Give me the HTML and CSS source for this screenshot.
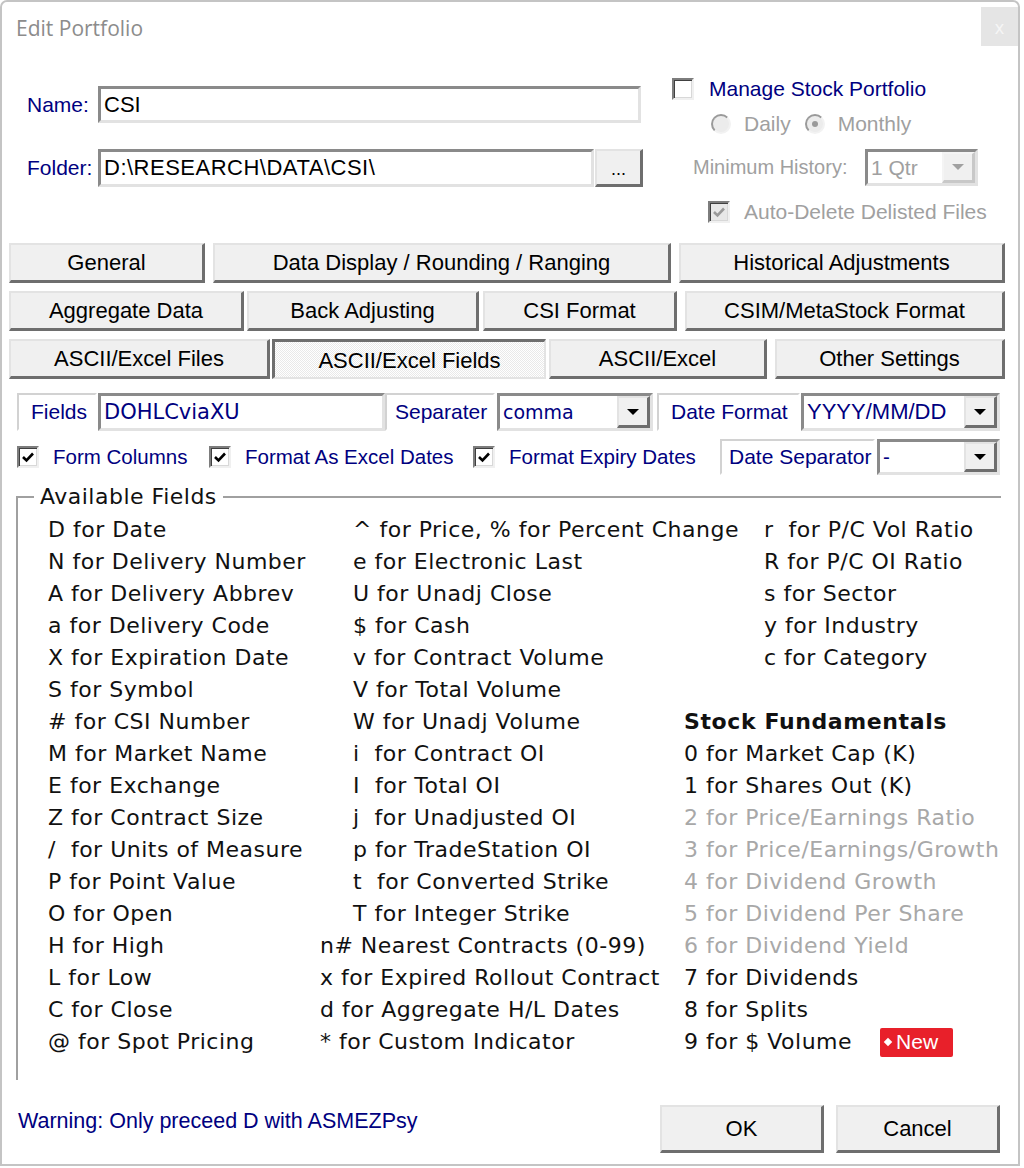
FILE: index.html
```html
<!DOCTYPE html>
<html>
<head>
<meta charset="utf-8">
<title>Edit Portfolio</title>
<link rel="stylesheet" href="styles.css">
</head>
<body>
<div class="window">
  <div class="titlebar">
    <span class="title">Edit Portfolio</span>
    <span class="close">x</span>
  </div>

  <div class="top">
    <div class="ident">
      <div class="row r-name">
        <span class="lbl">Name:</span>
        <div class="input w-name">CSI</div>
      </div>
      <div class="row r-folder">
        <span class="lbl">Folder:</span>
        <div class="input w-folder">D:\RESEARCH\DATA\CSI\</div>
        <div class="btn browse">...</div>
      </div>
    </div>
    <div class="stock">
      <div class="srow s-manage">
        <span class="chk"></span>
        <span class="navy">Manage Stock Portfolio</span>
      </div>
      <div class="srow s-radio">
        <span class="radio"></span><span class="dis">Daily</span>
        <span class="radio on"></span><span class="dis">Monthly</span>
      </div>
      <div class="srow s-hist">
        <span class="dis hist-lbl">Minimum History:</span>
        <div class="select disabled w-hist"><span class="val">1 Qtr</span><span class="arrow"></span></div>
      </div>
      <div class="srow s-auto">
        <span class="chk disabled checked"><svg viewBox="0 0 16 16"><polyline points="3,8 6.5,11.5 13,4.5"/></svg></span>
        <span class="dis">Auto-Delete Delisted Files</span>
      </div>
    </div>
  </div>

  <div class="tabs">
    <div class="tabrow">
      <div class="btn tab t196">General</div>
      <div class="btn tab t458">Data Display / Rounding / Ranging</div>
      <div class="btn tab t326">Historical Adjustments</div>
    </div>
    <div class="tabrow">
      <div class="btn tab t235">Aggregate Data</div>
      <div class="btn tab t232 g3">Back Adjusting</div>
      <div class="btn tab t194 g4">CSI Format</div>
      <div class="btn tab t320">CSIM/MetaStock Format</div>
    </div>
    <div class="tabrow">
      <div class="btn tab t261">ASCII/Excel Files</div>
      <div class="btn tab t274 g2 pressed">ASCII/Excel Fields</div>
      <div class="btn tab t218 g3">ASCII/Excel</div>
      <div class="btn tab t230">Other Settings</div>
    </div>
  </div>

  <div class="frow">
    <div class="lblbox b-fields">Fields</div>
    <div class="input verd w-fields">DOHLCviaXU</div>
    <div class="lblbox b-sep">Separater</div>
    <div class="select w-sep"><span class="val verd small">comma</span><span class="arrow"></span></div>
    <div class="lblbox b-datef">Date Format</div>
    <div class="select w-datef"><span class="val">YYYY/MM/DD</span><span class="arrow"></span></div>
  </div>

  <div class="crow">
    <div class="citem c1"><span class="chk checked"><svg viewBox="0 0 16 16"><polyline points="3,8 6.5,11.5 13,4.5"/></svg></span><span class="navy">Form Columns</span></div>
    <div class="citem c2"><span class="chk checked"><svg viewBox="0 0 16 16"><polyline points="3,8 6.5,11.5 13,4.5"/></svg></span><span class="navy">Format As Excel Dates</span></div>
    <div class="citem c3"><span class="chk checked"><svg viewBox="0 0 16 16"><polyline points="3,8 6.5,11.5 13,4.5"/></svg></span><span class="navy">Format Expiry Dates</span></div>
    <div class="lblbox b-dsep">Date Separator</div>
    <div class="select w-dsep"><span class="val">-</span><span class="arrow"></span></div>
  </div>

  <fieldset class="group">
    <legend>Available Fields</legend>
    <div class="cols">
      <div class="col col1">
        <div>D for Date</div>
        <div>N for Delivery Number</div>
        <div>A for Delivery Abbrev</div>
        <div>a for Delivery Code</div>
        <div>X for Expiration Date</div>
        <div>S for Symbol</div>
        <div># for CSI Number</div>
        <div>M for Market Name</div>
        <div>E for Exchange</div>
        <div>Z for Contract Size</div>
        <div>/&nbsp; for Units of Measure</div>
        <div>P for Point Value</div>
        <div>O for Open</div>
        <div>H for High</div>
        <div>L for Low</div>
        <div>C for Close</div>
        <div>@ for Spot Pricing</div>
      </div>
      <div class="col col2">
        <div class="ind">^ for Price, % for Percent Change</div>
        <div class="ind">e for Electronic Last</div>
        <div class="ind">U for Unadj Close</div>
        <div class="ind">$ for Cash</div>
        <div class="ind">v for Contract Volume</div>
        <div class="ind">V for Total Volume</div>
        <div class="ind">W for Unadj Volume</div>
        <div class="ind">i&nbsp; for Contract OI</div>
        <div class="ind">I&nbsp; for Total OI</div>
        <div class="ind">j&nbsp; for Unadjusted OI</div>
        <div class="ind">p for TradeStation OI</div>
        <div class="ind">t&nbsp; for Converted Strike</div>
        <div class="ind">T for Integer Strike</div>
        <div>n# Nearest Contracts (0-99)</div>
        <div>x for Expired Rollout Contract</div>
        <div>d for Aggregate H/L Dates</div>
        <div>* for Custom Indicator</div>
      </div>
      <div class="col col3">
        <div class="ind3">r&nbsp; for P/C Vol Ratio</div>
        <div class="ind3">R for P/C OI Ratio</div>
        <div class="ind3">s for Sector</div>
        <div class="ind3">y for Industry</div>
        <div class="ind3">c for Category</div>
        <div>&nbsp;</div>
        <div class="bold">Stock Fundamentals</div>
        <div>0 for Market Cap (K)</div>
        <div>1 for Shares Out (K)</div>
        <div class="gray">2 for Price/Earnings Ratio</div>
        <div class="gray">3 for Price/Earnings/Growth</div>
        <div class="gray">4 for Dividend Growth</div>
        <div class="gray">5 for Dividend Per Share</div>
        <div class="gray">6 for Dividend Yield</div>
        <div>7 for Dividends</div>
        <div>8 for Splits</div>
        <div class="newrow">9 for $ Volume <span class="badge"><span class="dot"></span>New</span></div>
      </div>
    </div>
  </fieldset>

  <div class="bottom">
    <span class="navy warn">Warning: Only preceed D with ASMEZPsy</span>
    <div class="btns">
      <div class="btn ok">OK</div>
      <div class="btn cancel">Cancel</div>
    </div>
  </div>
</div>
</body>
</html>
```

FILE: styles.css
```css
* { box-sizing: border-box; }
html, body { margin: 0; padding: 0; background: #fff; }
body {
  width: 1024px;
  height: 1168px;
  overflow: hidden;
  font-family: "Liberation Sans", Arial, sans-serif;
  font-size: 22px;
  color: #000;
}

.window {
  width: 1020px;
  height: 1166px;
  border: 2px solid #c4c4c4;
  border-radius: 7px 7px 0 0;
  background: #fff;
  display: flex;
  flex-direction: column;
}

/* title bar */
.titlebar {
  height: 56px;
  display: flex;
  justify-content: space-between;
  align-items: flex-start;
}
.title {
  font-family: "Open Sans", sans-serif;
  font-size: 21px;
  line-height: 29px;
  color: #8c8c8c;
  margin: 12px 0 0 14px;
}
.close {
  width: 37px;
  height: 39px;
  margin-top: 5px;
  background: #e5e5e5;
  color: #f6f6f6;
  font-family: "Open Sans", sans-serif;
  font-size: 18px;
  display: flex;
  align-items: center;
  justify-content: center;
}

.navy { color: #000080; }
.dis { color: #a0a0a0; }
.verd { font-family: "DejaVu Sans", Verdana, sans-serif; font-size: 21px; }
.verd.small { font-size: 19px; }

/* top section */
.top {
  display: flex;
  height: 165px;
  margin-top: 20px;
}
.ident {
  margin: 8px 0 0 25px;
  width: 618px;
}
.row { display: flex; align-items: center; }
.r-name { height: 37px; }
.r-folder { height: 38px; margin-top: 26px; }
.lbl { width: 71px; color: #000080; font-size: 21px; }

.input {
  height: 100%;
  border: 3px solid;
  border-color: #8a8a8a #e2e2e2 #e2e2e2 #8a8a8a;
  background: #fff;
  display: flex;
  align-items: center;
  padding-left: 3px;
  white-space: nowrap;
  overflow: hidden;
}
.w-name { width: 543px; }
.w-folder { width: 496px; letter-spacing: 0.5px; }
.w-fields { width: 287px; margin-left: 1px; color: #000080; }

.btn {
  background: #f0f0f0;
  border-style: solid;
  border-width: 2px 3px 3px 2px;
  border-color: #e3e3e3 #6e6e6e #6e6e6e #e3e3e3;
  display: flex;
  align-items: center;
  justify-content: center;
  white-space: nowrap;
  color: #000;
}
.browse { width: 48px; height: 100%; margin-left: 1px; padding-top: 4px; font-size: 18px; }

.stock {
  margin-left: 27px;
  display: flex;
  flex-direction: column;
  font-size: 21px;
}
.srow { display: flex; align-items: center; }
.s-manage { height: 22px; }
.s-manage .chk { margin-right: 15px; }
.s-radio { height: 22px; margin-top: 13px; padding-left: 39px; }
.s-radio .radio { margin-right: 13px; }
.s-radio .dis + .radio { margin-left: 14px; }
.s-hist { height: 37px; margin-top: 14px; padding-left: 21px; }
.hist-lbl { width: 172px; font-size: 20px; }
.w-hist { width: 113px; }
.s-auto { height: 22px; margin-top: 15px; padding-left: 36px; }
.s-auto .chk { margin-right: 14px; }

/* checkbox */
.chk {
  width: 22px;
  height: 22px;
  flex: none;
  border: 2px solid;
  border-color: #7d7d7d #f0f0f0 #f0f0f0 #7d7d7d;
  box-shadow: inset 1px 1px 0 #404040, inset -1px -1px 0 #d8d8d8;
  background: #fff;
  display: flex;
  align-items: center;
  justify-content: center;
}
.chk svg { width: 16px; height: 16px; }
.chk polyline { fill: none; stroke: #000; stroke-width: 2.6; }
.chk.disabled { background: #e8e8e8; }
.chk.disabled polyline { stroke: #9a9a9a; }

/* radio */
.radio {
  width: 20px;
  height: 20px;
  flex: none;
  border-radius: 50%;
  border: 2px solid;
  border-color: #9a9a9a #f2f2f2 #f2f2f2 #9a9a9a;
  background: #ececec;
  display: flex;
  align-items: center;
  justify-content: center;
}
.radio.on::after {
  content: "";
  width: 6px;
  height: 6px;
  border-radius: 50%;
  background: #9a9a9a;
}

/* select */
.select {
  height: 100%;
  display: flex;
  border: 3px solid;
  border-color: #8a8a8a #e2e2e2 #e2e2e2 #8a8a8a;
  background: #fff;
}
.select .val {
  flex: 1;
  display: flex;
  align-items: center;
  padding-left: 3px;
  color: #000080;
  white-space: nowrap;
  overflow: hidden;
}
.select .arrow {
  width: 33px;
  flex: none;
  background: #f0f0f0;
  border-style: solid;
  border-width: 2px 3px 3px 2px;
  border-color: #e3e3e3 #6e6e6e #6e6e6e #e3e3e3;
  display: flex;
  align-items: center;
  justify-content: center;
}
.select .arrow::after {
  content: "";
  width: 0;
  height: 0;
  border-left: 6px solid transparent;
  border-right: 6px solid transparent;
  border-top: 6px solid #000;
}
.select.disabled .val { color: #a0a0a0; }
.select.disabled .arrow { border-color: #f4f4f4 #c8c8c8 #c8c8c8 #f4f4f4; }
.select.disabled .arrow::after { border-top-color: #a0a0a0; }

/* tabs */
.tabs {
  margin-left: 7px;
  display: flex;
  flex-direction: column;
  gap: 8px;
}
.tabrow { display: flex; height: 40px; gap: 8px; }
.tab { height: 40px; }
.tabrow .g2 { margin-left: -6px; }
.tabrow .g3 { margin-left: -5px; }
.tabrow .g4 { margin-left: -4px; }
.t196 { width: 196px; }
.t458 { width: 458px; }
.t326 { width: 326px; }
.t235 { width: 235px; }
.t232 { width: 232px; }
.t194 { width: 194px; }
.t320 { width: 320px; }
.t261 { width: 261px; }
.t274 { width: 274px; }
.t218 { width: 218px; }
.t230 { width: 230px; }
.pressed {
  border-width: 3px 2px 2px 3px;
  border-color: #6e6e6e #e3e3e3 #e3e3e3 #6e6e6e;
  background-color: #fff;
  background-image: repeating-conic-gradient(#e9e9e9 0 25%, #fff 0 50%);
  background-size: 2px 2px;
  padding-top: 2px;
}

/* fields rows */
.frow {
  display: flex;
  height: 38px;
  margin: 14px 0 0 15px;
}
.lblbox {
  height: 100%;
  border: 2px solid;
  border-color: #d2d2d2 #fff #fff #d2d2d2;
  display: flex;
  align-items: center;
  color: #000080;
  white-space: nowrap;
  font-size: 21px;
}
.b-fields { width: 80px; padding-left: 12px; }
.b-sep { width: 110px; padding-left: 8px; }
.w-sep { width: 156px; margin-left: 2px; }
.b-datef { width: 143px; margin-left: 4px; padding-left: 12px; }
.w-datef { width: 199px; margin-left: 1px; }

.crow {
  display: flex;
  height: 36px;
  margin: 8px 0 0 15px;
  align-items: center;
  font-size: 20.5px;
}
.citem { display: flex; align-items: center; }
.citem .chk { margin-right: 14px; }
.c1 { width: 192px; }
.c2 { width: 264px; }
.c3 { width: 247px; }
.b-dsep { width: 155px; padding-left: 7px; }
.w-dsep { width: 123px; margin-left: 2px; }

/* group */
.group {
  margin: 9px 0 0 14px;
  width: 985px;
  height: 596px;
  padding: 0 0 0 16px;
  border-style: solid;
  border-width: 2px 0 0 2px;
  border-color: #a0a0a0;
  font-family: "DejaVu Sans", Verdana, sans-serif;
  font-size: 22px;
  letter-spacing: 0.5px;
  color: #111;
}
.group legend {
  padding: 0 6px;
  line-height: 26px;
}
.cols {
  display: flex;
  margin: 4px 0 0 14px;
}
.col div { line-height: 32px; height: 32px; white-space: nowrap; }
.col1 { width: 272px; }
.col2 { width: 364px; }
.col2 .ind { padding-left: 33px; }
.col3 .ind3 { padding-left: 80px; }
.bold { font-weight: bold; letter-spacing: 0.6px; }
.gray { color: #a8a8a8; }
.newrow { display: flex; align-items: center; }
.badge {
  margin-left: 28px;
  width: 73px;
  height: 29px;
  background: #e8202a;
  border-radius: 2px;
  color: #fff;
  font-family: "Liberation Sans", Arial, sans-serif;
  font-size: 21px;
  letter-spacing: 0;
  display: flex;
  align-items: center;
  padding-left: 5px;
}
.dot {
  width: 6px;
  height: 6px;
  background: #fff;
  transform: rotate(45deg);
  margin-right: 5px;
}

/* bottom */
.bottom {
  display: flex;
  justify-content: space-between;
  margin: 25px 0 0 16px;
  height: 48px;
  font-size: 21.5px;
}
.warn { margin-top: 4px; }
.btns { display: flex; gap: 12px; margin-right: 18px; font-size: 22px; }
.ok, .cancel { width: 164px; height: 48px; }
```
